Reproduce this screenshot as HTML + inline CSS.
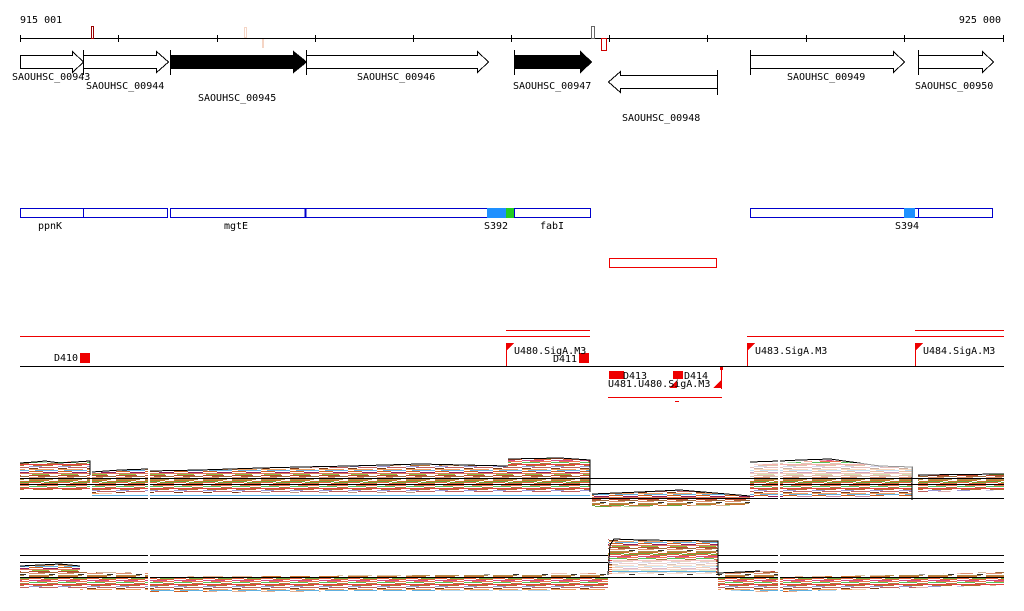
<!DOCTYPE html>
<html><head><meta charset="utf-8"><style>
html,body{margin:0;padding:0;background:#fff;}
svg{display:block;font-family:"DejaVu Sans Mono","Liberation Mono",monospace;font-size:10px;}
</style></head><body>
<svg width="1024" height="611" viewBox="0 0 1024 611" xmlns="http://www.w3.org/2000/svg" shape-rendering="crispEdges">
<defs>
<pattern id="st" width="29" height="24" patternUnits="userSpaceOnUse">
<rect width="29" height="24" fill="#fff"/>
<rect y="0" width="20" height="1" fill="#c8702a"/><rect x="20" y="1" width="9" height="1" fill="#c8702a"/>
<rect y="1" width="15" height="1" fill="#6aa83a"/><rect x="15" y="2" width="14" height="1" fill="#6aa83a"/>
<rect y="2" width="12" height="1" fill="#e0603a"/><rect x="12" y="3" width="17" height="1" fill="#e0603a"/>
<rect y="4" width="22" height="1" fill="#d44a8a"/><rect x="8" y="5" width="21" height="1" fill="#f07050"/>
<rect y="6" width="18" height="1" fill="#5ac05a"/><rect x="18" y="7" width="11" height="1" fill="#a08040"/>
<rect y="8" width="29" height="1" fill="#e84040"/><rect x="4" y="9" width="20" height="1" fill="#b07030"/>
<rect y="10" width="13" height="1" fill="#9a9ad8"/><rect x="10" y="11" width="19" height="1" fill="#c06060"/>
<rect y="12" width="9" height="1" fill="#7a3a1a"/><rect y="13" width="25" height="1" fill="#f0a060"/>
<rect x="6" y="14" width="23" height="1" fill="#60b0e0"/><rect y="15" width="14" height="1" fill="#d06020"/>
<rect x="14" y="16" width="15" height="1" fill="#902060"/><rect y="17" width="29" height="1" fill="#e07858"/>
<rect x="3" y="18" width="17" height="1" fill="#88c040"/><rect y="19" width="21" height="1" fill="#c04a30"/>
<rect x="9" y="20" width="20" height="1" fill="#a06838"/><rect y="21" width="16" height="1" fill="#e09070"/>
<rect x="20" y="22" width="6" height="1" fill="#303030"/><rect y="23" width="24" height="1" fill="#b08848"/>
</pattern>
</defs>
<!-- ruler -->
<text x="20" y="23">915 001</text>
<text x="1001" y="23" text-anchor="end">925 000</text>
<line x1="20" y1="38.5" x2="1004" y2="38.5" stroke="#000"/>
<g stroke="#000">
<line x1="20.5" y1="35" x2="20.5" y2="42"/><line x1="118.5" y1="35" x2="118.5" y2="42"/><line x1="217.5" y1="35" x2="217.5" y2="42"/><line x1="315.5" y1="35" x2="315.5" y2="42"/><line x1="413.5" y1="35" x2="413.5" y2="42"/><line x1="511.5" y1="35" x2="511.5" y2="42"/><line x1="609.5" y1="35" x2="609.5" y2="42"/><line x1="707.5" y1="35" x2="707.5" y2="42"/><line x1="806.5" y1="35" x2="806.5" y2="42"/><line x1="904.5" y1="35" x2="904.5" y2="42"/><line x1="1003.5" y1="35" x2="1003.5" y2="42"/>
</g>
<rect x="91.5" y="26.5" width="2" height="12" fill="none" stroke="#900"/>
<rect x="244.5" y="27.5" width="2" height="10" fill="none" stroke="#f5d5c5"/>
<rect x="262" y="39" width="2" height="9" fill="#f5d5c5"/>
<rect x="591.5" y="26.5" width="3" height="12" fill="none" stroke="#666"/>
<rect x="601.5" y="38.5" width="5" height="12" fill="none" stroke="#c00"/>
<!-- genes -->
<g stroke="#000" fill="#fff">
<path d="M20.5 55.5H72.5V51.5L83.5 62L72.5 72.5V68.5H20.5Z"/>
<path d="M83.5 55.5H156.5V51.5L168.5 62L156.5 72.5V68.5H83.5Z"/>
<path d="M170.5 55.5H293.5V51.5L306.5 62L293.5 72.5V68.5H170.5Z" fill="#000"/>
<path d="M306.5 55.5H477.5V51.5L488.5 62L477.5 72.5V68.5H306.5Z"/>
<path d="M514.5 55.5H580.5V51.5L591.5 62L580.5 72.5V68.5H514.5Z" fill="#000"/>
<path d="M717.5 75.5H620.5V71.5L608.5 82L620.5 92.5V88.5H717.5Z"/>
<path d="M750.5 55.5H893.5V51.5L904.5 62L893.5 72.5V68.5H750.5Z"/>
<path d="M918.5 55.5H982.5V51.5L993.5 62L982.5 72.5V68.5H918.5Z"/>
</g>
<g stroke="#000"><line x1="83.5" y1="50" x2="83.5" y2="75"/><line x1="170.5" y1="50" x2="170.5" y2="75"/><line x1="306.5" y1="50" x2="306.5" y2="75"/><line x1="514.5" y1="50" x2="514.5" y2="75"/><line x1="717.5" y1="70" x2="717.5" y2="95"/><line x1="750.5" y1="50" x2="750.5" y2="75"/><line x1="918.5" y1="50" x2="918.5" y2="75"/></g>
<text x="12" y="80">SAOUHSC_00943</text>
<text x="86" y="89">SAOUHSC_00944</text>
<text x="198" y="101">SAOUHSC_00945</text>
<text x="357" y="80">SAOUHSC_00946</text>
<text x="513" y="89">SAOUHSC_00947</text>
<text x="622" y="121">SAOUHSC_00948</text>
<text x="787" y="80">SAOUHSC_00949</text>
<text x="915" y="89">SAOUHSC_00950</text>
<!-- operons -->
<g fill="#fff" stroke="#00c">
<rect x="20.5" y="208.5" width="63" height="9"/><rect x="83.5" y="208.5" width="84" height="9"/>
<rect x="170.5" y="208.5" width="420" height="9"/><rect x="750.5" y="208.5" width="168" height="9"/><rect x="918.5" y="208.5" width="74" height="9"/>
</g>
<line x1="305.5" y1="208" x2="305.5" y2="218" stroke="#00c" stroke-width="2"/>
<line x1="514.5" y1="208" x2="514.5" y2="218" stroke="#00c"/>
<rect x="487" y="208" width="19" height="10" fill="#1e90ff"/><rect x="506" y="208" width="8" height="10" fill="#22cc22"/>
<rect x="904" y="208" width="11" height="10" fill="#1e90ff"/>
<text x="38" y="229">ppnK</text><text x="224" y="229">mgtE</text><text x="484" y="229">S392</text><text x="540" y="229">fabI</text><text x="895" y="229">S394</text>
<rect x="609.5" y="258.5" width="107" height="9" fill="none" stroke="#e00"/>
<!-- promoters -->
<g stroke="#e00">
<line x1="20" y1="336.5" x2="590" y2="336.5"/><line x1="747" y1="336.5" x2="1004" y2="336.5"/>
<line x1="506" y1="330.5" x2="590" y2="330.5"/><line x1="915" y1="330.5" x2="1004" y2="330.5"/>
<line x1="608" y1="397.5" x2="722" y2="397.5"/><line x1="675" y1="401.5" x2="679" y2="401.5"/>
<line x1="506.5" y1="343" x2="506.5" y2="366"/><line x1="747.5" y1="343" x2="747.5" y2="366"/><line x1="915.5" y1="343" x2="915.5" y2="366"/>
<line x1="721.5" y1="366" x2="721.5" y2="389"/>
</g>
<g fill="#e00">
<path d="M507 343H514L507 350Z"/><path d="M748 343H755L748 350Z"/><path d="M916 343H923L916 350Z"/>
<rect x="80" y="353" width="10" height="10"/><rect x="579" y="353" width="10" height="10"/>
<rect x="609" y="371" width="15" height="8"/><rect x="673" y="371" width="10" height="8"/>
<path d="M713 388H721V380Z"/><path d="M669 388H677V380Z"/><rect x="720" y="366" width="3" height="4"/>
</g>
<line x1="20" y1="366.5" x2="1004" y2="366.5" stroke="#000"/>
<text x="54" y="361">D410</text><text x="514" y="354">U480.SigA.M3</text><text x="553" y="362">D411</text>
<text x="755" y="354">U483.SigA.M3</text><text x="923" y="354">U484.SigA.M3</text>
<text x="623" y="379">D413</text><text x="684" y="379">D414</text><text x="608" y="387">U481.U480.SigA.M3</text>
<!-- expression track 1 -->
<g fill="url(#st)">
<path d="M20 463L60 462L90 461V490L20 490Z"/>
<path d="M92 472L148 469V492L92 494Z"/>
<path d="M150 471L300 468L420 465L508 466V492L150 493Z"/>
<path d="M508 459L560 458L590 460V492L508 492Z"/>
<path d="M592 494L640 492L680 490L750 496V505L592 507Z"/>
<path d="M750 465L800 462L830 460L880 466L912 468V496L750 497Z"/>
<path d="M918 475L1004 474V490L918 492Z"/>
</g>
<g fill="none" stroke="#000">
<polyline points="20,463 35,462 45,461 60,463 90,461 90,475"/>
<polyline points="92,472 120,470 148,469"/>
<polyline points="150,471 200,470 260,468 300,467 350,466 420,464 508,466"/>
<polyline points="508,459 560,458 590,460 590,492"/>
<polyline points="592,494 640,492 680,490 750,496"/>
<polyline points="750,462 780,461 800,460 830,459 880,466 912,467 912,500"/>
<polyline points="918,475 1004,474"/>
</g>
<rect x="750" y="463" width="162" height="14" fill="#fff" opacity="0.6"/>
<g stroke="#000"><line x1="20" y1="478.5" x2="1004" y2="478.5"/><line x1="20" y1="484.5" x2="1004" y2="484.5"/><line x1="20" y1="498.5" x2="1004" y2="498.5"/></g>
<line x1="92" y1="495.5" x2="590" y2="495.5" stroke="#60b0e0"/>
<rect x="148" y="455" width="2" height="50" fill="#fff"/><rect x="778" y="455" width="2" height="50" fill="#fff"/>
<!-- expression track 2 -->
<g stroke="#000"><line x1="20" y1="555.5" x2="1004" y2="555.5"/><line x1="20" y1="562.5" x2="1004" y2="562.5"/></g>
<g fill="url(#st)">
<path d="M20 566L60 564L80 566V588L20 588Z"/>
<path d="M80 572L148 573V590L80 590Z"/>
<path d="M150 577L300 576L450 575L608 573V590L150 592Z"/>
<path d="M608 539L640 540L718 541V575L608 575Z"/>
<path d="M718 573L778 571V592L718 590Z"/>
<path d="M780 577L900 575L1004 572V585L780 592Z"/>
</g>
<g fill="none" stroke="#000">
<polyline points="20,566 40,565 60,564 80,566"/>
<polyline points="608,575 610,545 614,539 640,540 718,541 718,575"/>
<polyline points="718,573 740,572 760,571"/>
</g>
<rect x="612" y="560" width="104" height="14" fill="#fff" opacity="0.7"/>
<line x1="612" y1="571.5" x2="716" y2="571.5" stroke="#60b0e0"/>
<line x1="20" y1="577.5" x2="1004" y2="577.5" stroke="#000"/>
<rect x="148" y="545" width="2" height="55" fill="#fff"/><rect x="778" y="545" width="2" height="55" fill="#fff"/>
</svg>
</body></html>
